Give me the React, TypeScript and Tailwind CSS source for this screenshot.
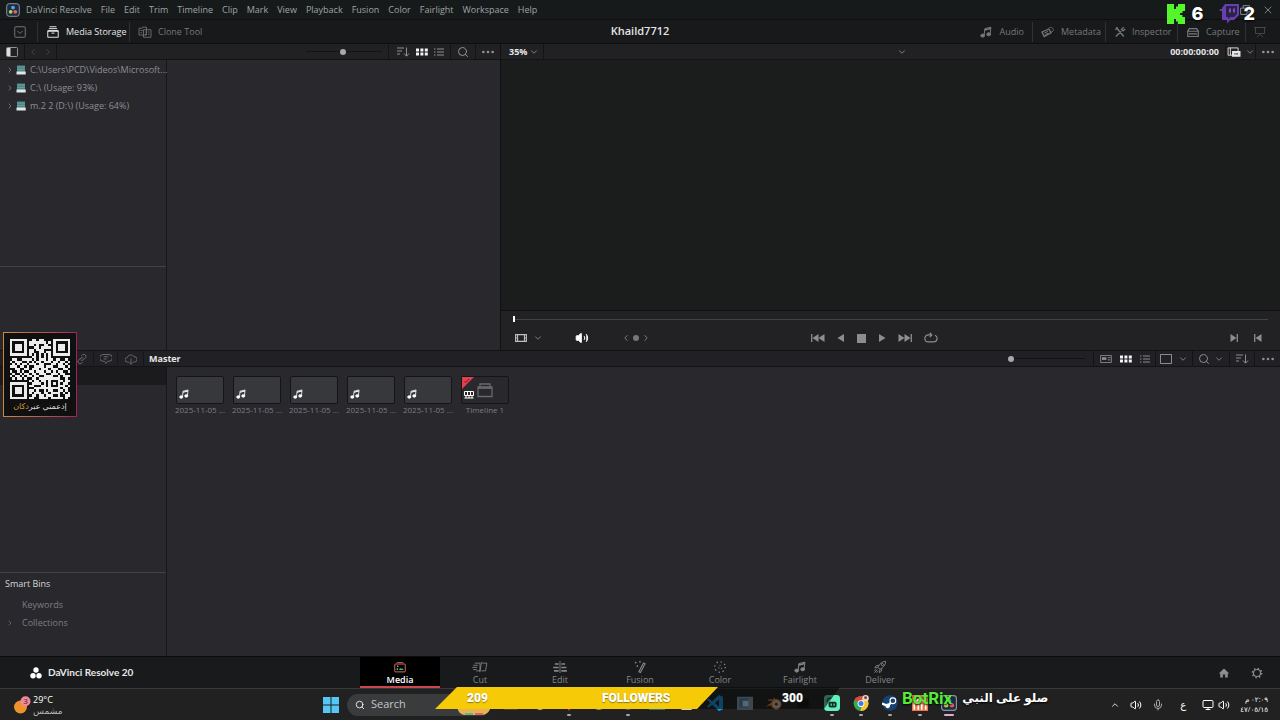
import type { ReactNode } from "react";
import {
  ChevronDown,
  ChevronLeft,
  ChevronRight,
  ChevronUp,
  Ellipsis,
  Mic,
  Minus,
  Monitor,
  Search,
  Volume2,
  X,
} from "lucide-react";

const menus = [
  "DaVinci Resolve",
  "File",
  "Edit",
  "Trim",
  "Timeline",
  "Clip",
  "Mark",
  "View",
  "Playback",
  "Fusion",
  "Color",
  "Fairlight",
  "Workspace",
  "Help",
];

const drives = [
  "C:\\Users\\PCD\\Videos\\Microsoft...",
  "C:\\ (Usage: 93%)",
  "m.2 2 (D:\\) (Usage: 64%)",
];

const clips = [1, 2, 3, 4, 5];

const qrRows = [
  "1111111001101100001111111",
  "1000001011111110101000001",
  "1011101011010011001011101",
  "1011101000110111101011101",
  "1011101011011100001011101",
  "1000001011001101101000001",
  "1111111010101010101111111",
  "0000000001101010100000000",
  "0110011110101110110110010",
  "1011100101011011101101101",
  "0101011011101100011011010",
  "1110110100111101110011101",
  "0011001101110111011100110",
  "1001010011011101101011001",
  "0100101101101110011101100",
  "1011010110110011110010111",
  "0101101001101111111110010",
  "0000000010110110100011011",
  "1111111001111010101010110",
  "1000001011000110100011101",
  "1011101000111111111110110",
  "1011101011010010110011010",
  "1011101010111011011110101",
  "1000001001101101110010011",
  "1111111011001111011111010",
];

type IconProps = {
  className?: string;
  box?: string;
  children: ReactNode;
};

const Icon = ({ className = "size-3", box = "0 0 16 16", children }: IconProps) => (
  <svg
    viewBox={box}
    className={`shrink-0 ${className}`}
    fill="none"
    stroke="currentColor"
    strokeWidth="1.3"
    aria-hidden="true"
  >
    {children}
  </svg>
);

const MusicIcon = ({ className }: { className?: string }) => (
  <Icon className={className}>
    <path d="M5.5 12.5 6.5 3.5l8-2-1 9" />
    <path d="M6.3 5.2l8-2" strokeWidth="2" />
    <ellipse cx="3.6" cy="12.8" rx="2.5" ry="2" fill="currentColor" />
    <ellipse cx="11.6" cy="11" rx="2.5" ry="2" fill="currentColor" />
  </Icon>
);

const GridIcon = () => (
  <Icon className="h-2 w-3 text-[#f4f4f4]" box="0 0 12 8">
    <g fill="currentColor" stroke="none">
      <path d="M0 .5h3v3H0zM4.400.5h3v3h-3zM8.800.5h3v3h-3zM0 4.500h3v3H0zM4.400 4.500h3v3h-3zM8.800 4.500h3v3h-3z" />
    </g>
  </Icon>
);

const ListIcon = () => (
  <Icon className="h-2 w-2.5" box="0 0 10 8">
    <path d="M0 1h1.500M3 1h7M0 4h1.500M3 4h7M0 7h1.500M3 7h7" strokeWidth="1" />
  </Icon>
);

const SortIcon = () => (
  <Icon className="h-3 w-3.5" box="0 0 14 12">
    <path d="M1 2h7M1 5h5M1 8h3M10.500 1.500v8.500M8 7.500l2.500 2.700L13 7.500" strokeWidth="1" />
  </Icon>
);

const DriveIcon = () => (
  <Icon className="h-2.5 w-2.5" box="0 0 10 10">
    <path d="M1 .5h8V7H1z" fill="#4f8587" stroke="none" />
    <path d="M1 2h8M1 4.500h8" stroke="#6da3a2" strokeWidth=".8" />
    <path d="M.5 6.500h9.200V9.500H.5z" fill="#e1e7e7" stroke="none" />
  </Icon>
);

const StackIcon = ({ className }: { className?: string }) => (
  <Icon className={className}>
    <path d="M3 4.500V2h10v2.500M1 5h14v9.500H1z" />
    <path d="M1 6h14" strokeWidth="1.800" />
  </Icon>
);

const BallsIcon = () => (
  <Icon className="size-3 text-white" box="0 0 12 12">
    <g fill="currentColor" stroke="none">
      <circle cx="6" cy="3" r="2.700" />
      <circle cx="3" cy="8.700" r="2.700" />
      <circle cx="9" cy="8.700" r="2.700" />
    </g>
  </Icon>
);

const pages = [
  {
    name: "Media",
    icon: (
      <Icon className="size-3">
        <path d="M3.500 2h9" stroke="#b84d4b" />
        <rect x="1" y="4" width="14" height="10.500" rx="1" stroke="#d3736b" />
        <path d="M3.500 12v-2.500h2V12zM7 12h6l-2-2.500-1.500 1L8 9z" fill="#3fc177" stroke="none" />
        <circle cx="5" cy="7" r=".9" fill="#eee" stroke="none" />
      </Icon>
    ),
  },
  {
    name: "Cut",
    icon: (
      <Icon className="h-3 w-4" box="0 0 18 14">
        <path d="M3 2.500h6v9H4.500M1 5h5.500M0 7.500h5.500M1 10h4M11.500 2.500H17l-1.500 9h-5M10.800 1l-2 12" strokeWidth="1" />
      </Icon>
    ),
  },
  {
    name: "Edit",
    icon: (
      <Icon className="h-3 w-4" box="0 0 18 14">
        <path d="M9 0v14" strokeWidth="1" />
        <path d="M3 3.500h4.500M10.500 3.500H15M1 7.500h6.500M10.500 7.500h6M2 11.500h5.500M10.500 11.500H17" strokeWidth="1.800" />
      </Icon>
    ),
  },
  {
    name: "Fusion",
    icon: (
      <Icon className="size-3.5">
        <path d="M12 3.500l1.800.8-5.300 10-1.800-.9z" />
        <path d="M3 2v2M2 3h2M8 1v2M7 2h2M5 6v2M4 7h2" strokeWidth="1" />
      </Icon>
    ),
  },
  {
    name: "Color",
    icon: (
      <Icon className="size-3.5">
        <circle cx="8" cy="8" r="6" strokeDasharray="1.500 3.212" strokeWidth="1.500" />
        <path d="M8 5.500v1.500M6 9h1.500M9 9.500h1.500" strokeWidth="1" />
      </Icon>
    ),
  },
  { name: "Fairlight", icon: <MusicIcon className="size-3" /> },
  {
    name: "Deliver",
    icon: (
      <Icon className="size-3.5">
        <path d="M5.500 8.500C7.500 4 10.500 1.800 14.500 1.500c0 4-2.300 7-6.500 9zM6.700 6.200l-3 .3L2 9l3.500-.5M10 9.500l-.3 3.200L7.300 14.500 8 10.500M5 11l-3.500 3.500M3.500 10.500l-2 2M6 12.500l-2 2" strokeWidth="1" />
        <circle cx="10.700" cy="5.300" r="1.300" strokeWidth="1" />
      </Icon>
    ),
  },
];

const MenuBar = () => (
  <nav className="flex h-5 items-center gap-1.5 border-b border-[#0d0e0f] bg-[#171a1b] pl-1.5 text-[9px] text-[#a0a2a3]">
    <svg viewBox="0 0 14 14" className="size-3.5 shrink-0" aria-hidden="true">
      <rect x=".7" y=".7" width="12.600" height="12.600" rx="2.500" fill="#1e2b40" stroke="#8793a8" />
      <circle cx="7" cy="4.600" r="1.900" fill="#4ba9dc" />
      <circle cx="4.700" cy="8.800" r="1.900" fill="#b7d354" />
      <circle cx="9.300" cy="8.800" r="1.900" fill="#e0625f" />
    </svg>
    <div className="flex gap-[9px]">
      {menus.map((menu) => (
        <button key={menu} type="button" className="whitespace-nowrap">
          {menu}
        </button>
      ))}
    </div>
    <div className="ml-auto flex items-center gap-3 pr-1.5">
      <button type="button" aria-label="Minimize">
        <Minus className="size-2.5" />
      </button>
      <button type="button" aria-label="Restore">
        <Icon className="size-2.5">
          <path d="M1 5h10v10H1zM5 5V1h10v10h-4" />
        </Icon>
      </button>
      <button type="button" aria-label="Close">
        <X className="size-3" strokeWidth={1.5} />
      </button>
    </div>
  </nav>
);

const ToolButton = ({ label, icon, className = "" }: { label: string; icon: ReactNode; className?: string }) => (
  <button type="button" className={`flex h-5 items-center gap-1.5 border-l border-[#303133] pl-2 whitespace-nowrap ${className}`}>
    {icon}
    {label}
  </button>
);

const Toolbar = () => (
  <header className="grid h-6 grid-cols-[1fr_auto_1fr] items-center border-b border-[#0e0e10] bg-[#18191b] text-[9px] text-[#77787a]">
    <div className="flex items-center">
      <button type="button" aria-label="Panels" className="flex w-[37px] justify-center pl-0.5">
        <Icon className="size-3">
          <rect x="1" y="1" width="14" height="14" rx="1" />
          <path d="M4.500 6.500 8 10l3.500-3.500" />
        </Icon>
      </button>
      <ToolButton
        label="Media Storage"
        className="w-[92px] text-[#e6e6e6]"
        icon={
          <Icon className="h-3 w-3.5">
            <path d="M3.500 1h9M2.500 3.500h11M1 6.500h14V15H1z" />
            <path d="M1 6.500h14" strokeWidth="2" />
            <path d="M6 9.500h4" />
          </Icon>
        }
      />
      <ToolButton
        label="Clone Tool"
        icon={
          <Icon className="h-3 w-3.5" box="0 0 18 16">
            <path d="M1 3h4l1-1.500h5V12H1zM7 5h10v10H7zM3 6h3M3 9h2M9 8h2M13 8h2M9 11h2M13 11h2" strokeWidth="1.100" />
          </Icon>
        }
      />
    </div>
    <h1 className="text-[11px] font-semibold text-[#e4e4e4]">Khaild7712</h1>
    <div className="flex items-center justify-end">
      <button type="button" className="flex h-5 items-center gap-2 pr-2">
        <MusicIcon className="size-3" />
        Audio
      </button>
      <ToolButton
        label="Metadata"
        className="w-[73px]"
        icon={
          <Icon className="h-3 w-3.5" box="0 0 18 16">
            <path d="M1 8l9-4 3 5-9 5z" strokeWidth="1.800" />
            <path d="M4 9.500l5-2.300M5.500 11.500l4-2" />
            <path d="M10 3c2-2 6-1 6 2 0 2-1.500 3-3 3" strokeWidth="1" />
          </Icon>
        }
      />
      <ToolButton
        label="Inspector"
        className="w-[72px]"
        icon={
          <Icon className="size-3">
            <path d="M3 2l10 12M2 5l3-3M13 1.500l-3 3 2 2 3-2.500M9.500 7l-7 7" strokeWidth="1.800" />
          </Icon>
        }
      />
      <ToolButton
        label="Capture"
        className="w-[68px]"
        icon={
          <Icon className="h-3 w-3.5">
            <path d="M3 3.500h10L15 7H1zM1 7h14v7H1z" strokeWidth="1.600" />
            <path d="M3 10.500h10" strokeWidth="2.500" strokeDasharray="2 .7" />
          </Icon>
        }
      />
      <button type="button" aria-label="Full screen" className="flex h-5 w-[35px] items-center border-l border-[#303133] pl-2 text-[#464749]">
        <Icon className="size-3">
          <path d="M0 2h16M2 2v8h12V2M8 10v1M4 15l4-4 4 4" />
        </Icon>
      </button>
    </div>
  </header>
);

const Cell = ({ label, className = "", children }: { label: string; className?: string; children: ReactNode }) => (
  <button type="button" aria-label={label} className={`flex h-full items-center justify-center ${className}`}>
    {children}
  </button>
);

const Slider = ({ label, value, className }: { label: string; value: number; className: string }) => (
  <input
    type="range"
    aria-label={label}
    defaultValue={value}
    className={`h-1.5 appearance-none bg-[linear-gradient(#131316,#131316)] bg-[length:100%_1px] bg-center bg-no-repeat [&::-webkit-slider-thumb]:size-1.5 [&::-webkit-slider-thumb]:appearance-none [&::-webkit-slider-thumb]:rounded-full [&::-webkit-slider-thumb]:bg-[#a9a9ab] ${className}`}
  />
);

const StoragePanel = () => (
  <section className="flex w-[501px] shrink-0 flex-col border-r border-[#111113]">
    <div className="flex h-4 items-center border-b border-[#131316] bg-[#212124] text-[#929294]">
      <Cell label="Sidebar" className="w-[25px] border-r border-[#141416]">
        <Icon className="h-2.5 w-3" box="0 0 12 10">
          <rect x=".5" y=".5" width="11" height="9" rx="1" strokeWidth="1" />
          <path d="M1 1h3.500v8H1z" fill="#ddd" stroke="none" />
        </Icon>
      </Cell>
      <div className="flex h-full w-8 items-center justify-around border-r border-[#141416] text-[#4c4c50]">
        <button type="button" aria-label="Back">
          <ChevronLeft className="size-2.5" />
        </button>
        <button type="button" aria-label="Forward">
          <ChevronRight className="size-2.5" />
        </button>
      </div>
      <Slider label="Storage thumbnail size" value={48} className="mr-1.5 ml-auto w-[76px]" />
      <div className="flex h-full w-[63px] items-center justify-center gap-1.5 border-x border-[#141416]">
        <button type="button" aria-label="Sort">
          <SortIcon />
        </button>
        <button type="button" aria-label="Thumbnails">
          <GridIcon />
        </button>
        <button type="button" aria-label="List">
          <ListIcon />
        </button>
      </div>
      <Cell label="Search storage" className="w-[25px] border-r border-[#141416]">
        <Search className="size-3" />
      </Cell>
      <Cell label="Storage options" className="w-6">
        <Ellipsis className="size-4" />
      </Cell>
    </div>
    <div className="flex min-h-0 flex-1">
      <div className="flex w-[167px] shrink-0 flex-col border-r border-[#17171a]">
        <ul className="flex-1 pt-px text-[9px] text-[#8e8e91]">
          {drives.map((drive) => (
            <li key={drive} className="flex h-[18px] items-center pl-1.5 whitespace-nowrap">
              <ChevronRight className="size-2 shrink-0" />
              <span className="mr-1 ml-0.5 shrink-0">
                <DriveIcon />
              </span>
              <span className="min-w-0">{drive}</span>
            </li>
          ))}
        </ul>
        <div className="h-[84px] border-t border-[#434346]" />
      </div>
    </div>
  </section>
);

const Transport = () => (
  <div className="h-10 border-t border-[#101011] bg-[#222225] px-3 text-[#8d8d90]">
    <div className="flex h-4 items-center">
      <span className="h-1.5 w-0.5 bg-white" />
      <span className="h-px flex-1 bg-[#434544]" />
    </div>
    <div className="grid h-[22px] grid-cols-[1fr_auto_1fr] items-center">
      <div className="flex items-center">
        <button type="button" aria-label="Clip view" className="ml-0.5 flex items-center gap-1.5">
          <Icon className="h-2.5 w-3 text-[#bebec0]" box="0 0 14 11">
            <path d="M.7 1.500h12.600v8H.7zM3 1.500v8M11 1.500v8" />
            <path d="M.7 5.500H3M11 5.500h2.500" />
          </Icon>
          <ChevronDown className="size-2.5" />
        </button>
        <button type="button" aria-label="Volume" className="ml-8 text-white">
          <Volume2 className="size-3.5" fill="currentColor" strokeWidth={1.500} />
        </button>
        <div className="ml-8 flex items-center gap-0.5">
          <ChevronLeft className="size-2.5" />
          <span className="size-1.5 rounded-full bg-[#77777a]" />
          <ChevronRight className="size-2.5" />
        </div>
      </div>
      <div className="flex items-center gap-3 pr-8">
        <button type="button" aria-label="First frame">
          <Icon className="h-2.5 w-3.5" box="0 0 14 10">
            <path d="M.700 1v8" />
            <path d="M7.500 1v8L1.500 5zM13.500 1v8L7.500 5z" fill="currentColor" stroke="none" />
          </Icon>
        </button>
        <button type="button" aria-label="Play reverse">
          <Icon className="size-2" box="0 0 8 8">
            <path d="M7 0v8L.5 4z" fill="currentColor" stroke="none" />
          </Icon>
        </button>
        <button type="button" aria-label="Stop" className="size-[9px] bg-[#8d8d90]" />
        <button type="button" aria-label="Play">
          <Icon className="size-2" box="0 0 8 8">
            <path d="M1 0v8l6.500-4z" fill="currentColor" stroke="none" />
          </Icon>
        </button>
        <button type="button" aria-label="Last frame">
          <Icon className="h-2.5 w-3.5" box="0 0 14 10">
            <path d="M13.300 1v8" />
            <path d="M.5 1v8l6-4zM6.500 1v8l6-4z" fill="currentColor" stroke="none" />
          </Icon>
        </button>
        <button type="button" aria-label="Loop">
          <Icon className="h-3 w-3.5" box="0 0 16 13">
            <path d="M9 3H5a4 4 0 0 0 0 8h6a4 4 0 0 0 1.500-7.700M6.500.5 9 3 6.500 5.500" />
          </Icon>
        </button>
      </div>
      <div className="flex items-center justify-end gap-4 pr-1.5">
        <button type="button" aria-label="Mark out">
          <Icon className="size-2" box="0 0 8 8">
            <path d="M7.300 0v8" />
            <path d="M.5 0v8l6-4z" fill="currentColor" stroke="none" />
          </Icon>
        </button>
        <button type="button" aria-label="Mark in">
          <Icon className="size-2" box="0 0 8 8">
            <path d="M.700 0v8" />
            <path d="M7.500 0v8l-6-4z" fill="currentColor" stroke="none" />
          </Icon>
        </button>
      </div>
    </div>
  </div>
);

const Viewer = () => (
  <section className="flex min-w-0 flex-1 flex-col">
    <div className="flex h-4 items-center border-b border-[#131316] bg-[#212124] text-[9px] font-bold text-[#e6e6e6]">
      <button type="button" className="flex h-full w-[43px] items-center justify-between border-r border-[#141416] pr-1 pl-2">
        35%
        <ChevronDown className="size-2.5 text-[#929294]" />
      </button>
      <button type="button" aria-label="Source clip" className="mx-auto pl-[90px] text-[#929294]">
        <ChevronDown className="size-2.5" />
      </button>
      <span>00:00:00:00</span>
      <Cell label="Viewer mode" className="ml-1.5 w-[31px] gap-1 border-x border-[#141416]">
        <Icon className="h-2.5 w-3.5" box="0 0 15 11">
          <path d="M1 1h11v8H1zM3.500 1v8" strokeWidth="1" />
          <path d="M6 5h8v5H6z" fill="currentColor" />
          <path d="M8 7.500h4" stroke="#212124" strokeWidth="1.500" strokeDasharray="1 .5" />
        </Icon>
        <ChevronDown className="size-2.5 text-[#929294]" />
      </Cell>
      <Cell label="Viewer options" className="w-6 text-[#929294]">
        <Ellipsis className="size-4" />
      </Cell>
    </div>
    <div className="flex-1 bg-[#1b1c1c]" />
    <Transport />
  </section>
);

const MediaPool = () => (
  <section className="flex min-h-0 flex-1 flex-col">
    <div className="flex h-[17px] items-center border-y border-[#131316] bg-[#212125] text-[9px] text-[#8d8d90]">
      <div className="flex h-full w-[144px] items-center justify-end text-[#68686c]">
        <Cell label="Link" className="w-6 border-r border-[#17171a]">
          <Icon className="size-3">
            <path d="M7 4l2-2a3 3 0 0 1 4 4l-3 3a3 3 0 0 1-4 0M9 12l-2 2a3 3 0 0 1-4-4l3-3a3 3 0 0 1 4 0" />
          </Icon>
        </Cell>
        <Cell label="Comments" className="w-6 border-r border-[#17171a]">
          <Icon className="size-3">
            <path d="M4 2h8a3 3 0 0 1 0 9h-2l-2 3-2-3H4a3 3 0 0 1 0-9zM5 5h6M5 8h4" />
          </Icon>
        </Cell>
        <Cell label="Cloud" className="w-[26px] border-r border-[#17171a]">
          <Icon className="size-3">
            <path d="M5 12H3a3 3 0 0 1 0-6 5 5 0 0 1 9-1 3.500 3.500 0 0 1 1 7h-2M8 7v8M5.500 12.500 8 15l2.500-2.500" />
          </Icon>
        </Cell>
      </div>
      <h2 className="pl-[5px] font-bold text-[#e6e6e6]">Master</h2>
      <Slider label="Pool thumbnail size" value={0} className="mr-2 ml-auto w-[77px]" />
      <div className="flex h-full w-[63px] items-center justify-center gap-2 border-x border-[#141416]">
        <button type="button" aria-label="Metadata view">
          <Icon className="h-2 w-3" box="0 0 13 9">
            <path d="M.5.5h12v8H.5zM8.500 3h3M8.500 5.500h3" strokeWidth="1" />
            <path d="M2 2.500h5v3H2z" fill="currentColor" stroke="none" />
          </Icon>
        </button>
        <button type="button" aria-label="Pool thumbnails">
          <GridIcon />
        </button>
        <button type="button" aria-label="Pool list">
          <ListIcon />
        </button>
      </div>
      <Cell label="Filter" className="w-[37px] gap-1.5 border-r border-[#141416]">
        <Icon className="h-2.5 w-3" box="0 0 12 10">
          <path d="M.5.5h11v9H.5z" strokeWidth="1" />
        </Icon>
        <ChevronDown className="size-2.5" />
      </Cell>
      <Cell label="Search pool" className="w-[37px] gap-1 border-r border-[#141416]">
        <Search className="size-3" />
        <ChevronDown className="size-2.5" />
      </Cell>
      <Cell label="Sort pool" className="w-[25px] border-r border-[#141416]">
        <SortIcon />
      </Cell>
      <Cell label="Pool options" className="w-[25px]">
        <Ellipsis className="size-4" />
      </Cell>
    </div>
    <div className="flex min-h-0 flex-1">
      <aside className="flex w-[167px] shrink-0 flex-col border-r border-[#17171a] text-[9px]">
        <div className="h-[18px] bg-[#1b1b1e]" />
        <div className="flex-1" />
        <div className="h-[84px] border-t border-[#434346] text-[#7e7e81]">
          <h3 className="px-[5px] pt-[3px] leading-4 text-[#d6d6d7]">Smart Bins</h3>
          <p className="mt-1 pl-[22px] leading-[18px]">Keywords</p>
          <p className="flex items-center pl-1.5 leading-[18px]">
            <ChevronRight className="mr-2 size-2" />
            Collections
          </p>
        </div>
      </aside>
      <div className="flex gap-[9px] pt-[9px] pl-[9px]">
        {clips.map((clip) => (
          <figure key={clip} className="flex w-12 flex-col items-center">
            <div className="flex h-7 w-12 items-end rounded-xs border border-[#151517] bg-[#37383c] pb-1 pl-0.5 text-white">
              <MusicIcon className="size-2.5" />
            </div>
            <figcaption className="text-[8px] leading-3 whitespace-nowrap text-[#7e7e81]">2025-11-05 ...</figcaption>
          </figure>
        ))}
        <figure className="flex w-12 flex-col items-center">
          <div className="relative flex h-7 w-12 items-center justify-center rounded-xs border border-[#151517] text-[#69696c]">
            <StackIcon className="size-4" />
            <svg viewBox="0 0 12 12" className="absolute top-0 left-0 size-3" aria-hidden="true">
              <path d="M0 0h12L0 12z" fill="#e13f4b" />
              <path d="M2.500 4l1.500 1.500L7 2" fill="none" stroke="#7d1a22" />
            </svg>
            <Icon className="absolute bottom-1 left-0.5 h-2 w-2.5 text-white" box="0 0 10 8">
              <path d="M.5.500h9v4h-9zM.5 7h9M3.500.5v4M6.500.5v4M2 5v2M5 5v2M8 5v2" strokeWidth="1" />
            </Icon>
          </div>
          <figcaption className="text-[8px] leading-3 text-[#7e7e81]">Timeline 1</figcaption>
        </figure>
      </div>
    </div>
  </section>
);

const PageBar = () => (
  <footer className="grid h-8 shrink-0 grid-cols-[1fr_auto_1fr] border-t border-[#0c0c0d] bg-[#181a1b]">
    <div className="flex items-center gap-1.5 pl-[30px] font-['Lato',sans-serif] text-[10px] font-bold text-[#e8e8e8]">
      <BallsIcon />
      DaVinci Resolve 20
    </div>
    <nav className="flex">
      {pages.map((page, index) => (
        <button
          key={page.name}
          type="button"
          className={`flex w-20 flex-col items-center justify-end border-b-2 text-[9px] ${
            index === 0
              ? "border-[#c9484a] bg-black font-semibold text-white"
              : "border-transparent text-[#848688]"
          }`}
        >
          <span className="flex h-3.5 items-center">{page.icon}</span>
          <span className="leading-3">{page.name}</span>
        </button>
      ))}
    </nav>
    <div className="flex items-center justify-end gap-[21px] pr-[17px] text-[#8d8e90]">
      <button type="button" aria-label="Project manager">
        <Icon className="size-3">
          <path d="M8 2l7 6.500h-2V14H9.500v-4h-3v4H3V8.500H1z" fill="currentColor" stroke="none" />
        </Icon>
      </button>
      <button type="button" aria-label="Settings">
        <Icon className="size-3">
          <circle cx="8" cy="8" r="4.700" strokeWidth="1.500" />
          <circle cx="8" cy="8" r="6.200" strokeWidth="2" strokeDasharray="2 2.870" />
        </Icon>
      </button>
    </div>
  </footer>
);

const apps = [
  { name: "Explorer", icon: <rect x="1" y="4" width="12" height="9" fill="#454a46" /> },
  { name: "Clock", icon: <circle cx="7" cy="7" r="6" fill="#eee" /> },
  { name: "Maps", icon: <path d="M0 3h14l-7 11z" fill="#e23b35" />, open: true },
  {
    name: "Browser",
    icon: (
      <g>
        <circle cx="7" cy="7" r="6" fill="#d6c734" />
        <path d="M1 8a6 6 0 0 0 6 5V7z" fill="#58a84a" />
      </g>
    ),
  },
  { name: "Chat", icon: <circle cx="7" cy="7" r="6" fill="#6c63e8" />, open: true },
  { name: "Files", icon: <rect x="0" y="3" width="14" height="10" fill="#287fa5" /> },
  { name: "Notes", icon: <rect x="3" y="3" width="9" height="10" fill="#eee" /> },
  {
    name: "Code editor",
    icon: (
      <path
        d="M10.500 0 14 1.500v11L10.500 14 4.500 8.500 1.500 11 0 10l3-3-3-3 1.500-1 3 2.500zM10.500 4 7 7l3.500 3z"
        fill="#1b9ade"
      />
    ),
  },
  {
    name: "Photos",
    icon: (
      <g>
        <rect x="0" y="1.500" width="14" height="11" fill="#93a5ae" />
        <rect x="2" y="3" width="8" height="8" fill="#3c8cc4" />
        <rect x="5" y="5" width="5" height="5" fill="#e0eef5" />
      </g>
    ),
  },
  {
    name: "Blender",
    icon: (
      <g>
        <path d="M0 10l7-5H2V4h5L6 2l7 5" fill="#ff962c" />
        <circle cx="9" cy="8" r="4.500" fill="#ff962c" />
        <circle cx="9" cy="8" r="2.800" fill="#eee" />
        <circle cx="9" cy="8" r="1.600" fill="#235d99" />
      </g>
    ),
  },
  { name: "Terminal", icon: <rect x="2" y="3" width="10" height="8" fill="#111" /> },
  {
    name: "Streamlabs",
    open: true,
    icon: (
      <g>
        <rect width="14" height="14" rx="3" fill="#63f0bb" />
        <rect x="4" y="6" width="7" height="5" rx="1.500" fill="#122b29" />
        <path d="M2.500 6q.5-3.500 4-3.500" fill="none" stroke="#164b3f" />
        <path d="M6.300 7.500v2M8.800 7.500v2" stroke="#63f0bb" />
      </g>
    ),
  },
  {
    name: "Chrome",
    open: true,
    icon: (
      <g>
        <circle cx="7" cy="7.500" r="6.500" fill="#38a852" />
        <path d="M1.400 4.200A6.500 6.500 0 0 1 12.600 4.200L7 7.500z" fill="#e4473a" />
        <path d="M12.600 4.200A6.500 6.500 0 0 1 6.500 14L8 8.500 7 4.200z" fill="#f7c430" />
        <circle cx="7" cy="7.500" r="3" fill="#fff" />
        <circle cx="7" cy="7.500" r="2.200" fill="#3c7cea" />
        <circle cx="11" cy="2.800" r="2.800" fill="#ead9ce" />
        <circle cx="11" cy="2.500" r="1.300" fill="#7c4339" />
      </g>
    ),
  },
  {
    name: "Steam",
    open: true,
    icon: (
      <g>
        <circle cx="7" cy="7" r="6.800" fill="#164272" />
        <path d="M0 7.500l5 2L9.500 5" fill="none" stroke="#fff" strokeWidth="2" />
        <circle cx="9.500" cy="5" r="2.500" fill="#164272" stroke="#fff" />
        <circle cx="5" cy="9.500" r="2" fill="#fff" />
      </g>
    ),
  },
  {
    name: "Archive",
    open: true,
    icon: (
      <g>
        <rect width="14" height="14" fill="#ed7544" />
        <path d="M2 13V7l5-4 5 4v6M5.500 13V8M8.500 13V8" fill="none" stroke="#fff" strokeWidth="1.500" />
      </g>
    ),
  },
  {
    name: "DaVinci Resolve",
    icon: (
      <g>
        <rect x=".5" y=".5" width="13" height="13" rx="2.500" fill="#1e2b40" stroke="#8793a8" />
        <circle cx="7" cy="4.500" r="2" fill="#4ba9dc" />
        <circle cx="4.500" cy="9" r="2" fill="#b7d354" />
        <circle cx="9.500" cy="9" r="2" fill="#e0625f" />
      </g>
    ),
  },
];

const Taskbar = () => (
  <div className="relative flex h-8 shrink-0 items-center border-t border-[#383a3a] bg-[#202120] text-white">
    <button type="button" className="flex w-[323px] shrink-0 items-center gap-0.5 pl-[13px] text-left text-[9px] leading-[11px]">
      <svg viewBox="0 0 18 18" className="size-[18px]" aria-hidden="true">
        <circle cx="7.500" cy="11" r="6.500" fill="#ee922d" />
        <circle cx="12.500" cy="5.200" r="5" fill="#f08a9b" />
        <text x="10.200" y="8.200" fontSize="8" fill="#3c1720">
          3
        </text>
      </svg>
      <span>
        29°C
        <br />
        <span className="text-[#b9b9b9]">مشمس</span>
      </span>
    </button>
    <button type="button" aria-label="Start">
      <svg viewBox="0 0 16 16" className="size-4" aria-hidden="true">
        <path d="M0 0h7.500v7.500H0zM8.500 0H16v7.500H8.500zM0 8.500h7.500V16H0zM8.500 8.500H16V16H8.500z" fill="#56c6f4" />
      </svg>
    </button>
    <label className="ml-2 flex h-[22px] w-[144px] shrink-0 items-center gap-1.5 rounded-full bg-[#393b3c] pl-2">
      <Search className="size-2.5 shrink-0" />
      <input
        type="text"
        placeholder="Search"
        aria-label="Search"
        className="w-20 bg-transparent text-[11px] placeholder:text-[#c6c6c6]"
      />
      <svg viewBox="0 0 34 14" className="h-3.5 w-[34px] self-end" aria-hidden="true">
        <path d="M0 5h34q-3 8-9 8H8q-6 0-8-8z" fill="#e6b253" />
        <path d="M8 11h8v2H8z" fill="#62b878" />
        <path d="M18 11h8v2h-8z" fill="#de655f" />
      </svg>
    </label>
    <div className="ml-3 flex w-[454px] shrink-0 justify-between">
      {apps.map((app) => (
        <button
          key={app.name}
          type="button"
          aria-label={app.name}
          className="flex h-6 w-4 flex-col items-center gap-[3px] pt-0.5"
        >
          <svg viewBox="0 0 14 14" className="size-4 shrink-0">
            {app.icon}
          </svg>
          {app.open && <span className="h-0.5 w-1 shrink-0 rounded-full bg-[#a7a7a7]" />}
          {app.name === "DaVinci Resolve" && (
            <span className="h-0.5 w-2.5 shrink-0 rounded-full bg-[#dcaed5]" />
          )}
        </button>
      ))}
    </div>
    <div className="ml-auto flex items-center pr-3">
      <ChevronUp className="mr-2.5 size-2.5" />
      <Volume2 className="mr-2.5 size-3" />
      <Mic className="mr-4 size-3 text-[#aaa]" />
      <span className="mr-4 text-[10px]">ع</span>
      <Monitor className="mr-1 size-3" />
      <Volume2 className="mr-2.5 size-3" />
      <time dir="rtl" className="text-[7px] leading-[10px] whitespace-nowrap">
        ٠٢:٠٩ م
        <br />
        <bdo dir="ltr">٤٧/٠٥/١٥</bdo>
      </time>
    </div>

    <div className="absolute -top-0.5 left-[435px] grid h-[22px] w-[405px]">
      <svg viewBox="0 0 405 22" className="col-start-1 row-start-1 size-full" preserveAspectRatio="none" aria-hidden="true">
        <path d="M283 0h122l-16 22H262z" fill="#08090a" fillOpacity=".6" />
        <path d="M22 0h261l-21 22H0z" fill="#f6ca07" />
      </svg>
      <div className="col-start-1 row-start-1 flex items-center pl-8 font-['Roboto',sans-serif] text-[12px] font-black text-white [text-shadow:0_1px_1px_#3338]">
        <span className="w-[135px]">209</span>
        <span className="w-[180px]">FOLLOWERS</span>
        <span>300</span>
      </div>
    </div>
    <p className="absolute top-0 left-[902px] flex items-center gap-2.5 whitespace-nowrap [text-shadow:0_1px_2px_#000]">
      <span className="font-['Roboto',sans-serif] text-[17px] leading-[18px] font-bold text-[#55ee36]">BotRix</span>
      <span className="text-[12px] leading-4 font-bold">صلو على النبي</span>
    </p>
  </div>
);

const SupportCard = () => (
  <div className="absolute top-[332px] left-[3px] bg-gradient-to-r from-[#c98a3a] to-[#a51d5d] p-px">
    <div className="flex w-[72px] flex-col items-center bg-[#101011] pt-1.5">
      <svg viewBox="0 0 25 25" className="size-[60px]" shapeRendering="crispEdges" role="img" aria-label="QR">
        {qrRows.map((row, y) =>
          [...row].map((cell, x) =>
            cell === "1" ? <rect key={`${x}-${y}`} x={x} y={y} width="1" height="1" fill="#ececec" /> : null
          )
        )}
      </svg>
      <p dir="rtl" className="h-[17px] text-[8px] leading-[14px] whitespace-nowrap text-[#dedede]">
        إدعمني عبر<span className="text-[#d79a32]">دكان</span>
      </p>
    </div>
  </div>
);

const Counters = () => (
  <div className="absolute top-0.5 right-[25px] flex items-center font-['Inter',sans-serif] text-[18px] font-extrabold text-white [text-shadow:0_1px_2px_#000]">
    <svg viewBox="0 0 18 20" className="size-5" aria-hidden="true">
      <path d="M0 0h7v5h2V2.500h2V0h7v7h-2.500v2H13v2h2.500v2H18v7h-7v-2.500H9V15H7v5H0z" fill="#55f52b" />
    </svg>
    <span className="ml-1.5 leading-6">6</span>
    <svg viewBox="0 0 18 20" className="mr-1 ml-4 size-5" aria-hidden="true">
      <path d="M4 0h14v11l-5 5H9.500L6 19.500V16H1V4z" fill="#673fb0" />
      <path d="M5 2h11v8l-3 3H9.500L7 15v-2H5z" fill="#2c2148" />
      <path d="M9 4.500v4M13 4.500v4" stroke="#8058cb" strokeWidth="1.800" />
    </svg>
    <span className="leading-6">2</span>
  </div>
);

export default function App() {
  return (
    <main className="relative flex h-screen flex-col overflow-hidden bg-[#28282d] font-['Open_Sans','Noto_Sans','DejaVu_Sans',sans-serif]">
      <MenuBar />
      <Toolbar />
      <div className="flex h-[306px] shrink-0">
        <StoragePanel />
        <Viewer />
      </div>
      <MediaPool />
      <PageBar />
      <Taskbar />
      <SupportCard />
      <Counters />
    </main>
  );
}
